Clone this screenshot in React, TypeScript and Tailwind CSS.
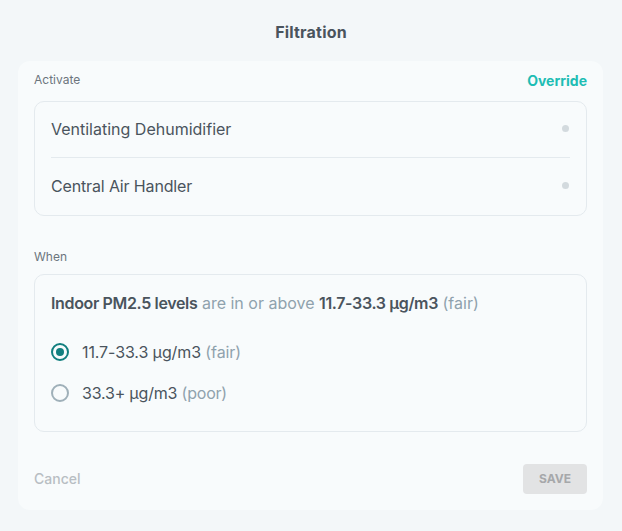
import React from "react";

export default function App() {
  return (
    <div className="w-[622px] h-[531px] bg-[#f3f7f9] flex flex-col items-center" style={{ fontFamily: "Inter, 'Liberation Sans', sans-serif" }}>
      <div className="h-[61px] flex items-center justify-center pt-[2px]">
        <h1 className="text-[16px] font-bold text-[#4a545d] tracking-[0.2px]">Filtration</h1>
      </div>
      <div className="w-[585px] h-[449px] bg-[#f8fbfc] rounded-[12px] px-[16px] pt-[11px] flex flex-col ml-[-1px]">
        <div className="flex items-center justify-between h-[16px]">
          <span className="text-[12px] text-[#6c757d]">Activate</span>
          <span className="text-[14px] font-bold text-[#1ebdb4]">Override</span>
        </div>
        <div className="mt-[13px] h-[115px] border border-[#e4eaee] rounded-[10px] px-[16px] flex flex-col">
          <div className="h-[56px] flex items-center justify-between border-b border-[#e4eaee] pb-[2px]">
            <span className="text-[16px] text-[#4a545d]">Ventilating Dehumidifier</span>
            <span className="w-[7px] h-[7px] rounded-full bg-[#d3dade] mr-[1px]"></span>
          </div>
          <div className="h-[57px] flex items-center justify-between pb-[2px]">
            <span className="text-[16px] text-[#4a545d] tracking-[-0.15px]">Central Air Handler</span>
            <span className="w-[7px] h-[7px] rounded-full bg-[#d3dade] mr-[1px]"></span>
          </div>
        </div>
        <div className="mt-[33px] h-[16px] flex items-center">
          <span className="text-[12px] text-[#6c757d]">When</span>
        </div>
        <div className="mt-[9px] h-[158px] border border-[#e4eaee] rounded-[10px] px-[16px] pt-[17px] flex flex-col">
          <p className="text-[16px] h-[22px] leading-[22px] text-[#8fa2ad]">
            <span className="font-semibold text-[#4a545d] tracking-[-0.35px]">Indoor PM2.5 levels</span> are in or above{" "}
            <span className="font-semibold text-[#4a545d] tracking-[-0.35px]">11.7-33.3 µg/m3</span> (fair)
          </p>
          <div className="mt-[27px] flex items-center h-[22px]">
            <span className="w-[18px] h-[18px] rounded-full border-2 border-[#127f7f] flex items-center justify-center">
              <span className="w-[8px] h-[8px] rounded-full bg-[#127f7f]"></span>
            </span>
            <span className="ml-[13px] text-[16px] text-[#4a545d] tracking-[-0.1px]">
              11.7-33.3 µg/m3 <span className="text-[#8fa2ad]">(fair)</span>
            </span>
          </div>
          <div className="mt-[19px] flex items-center h-[22px]">
            <span className="w-[18px] h-[18px] rounded-full border-2 border-[#9fb0b9]"></span>
            <span className="ml-[13px] text-[16px] text-[#4a545d] tracking-[-0.2px]">
              33.3+ µg/m3 <span className="text-[#8fa2ad]">(poor)</span>
            </span>
          </div>
        </div>
        <div className="mt-[32px] flex items-center justify-between">
          <span className="text-[14px] font-medium text-[#b8bec3] mt-[-2px]">Cancel</span>
          <button className="w-[64px] h-[30px] rounded-[4px] bg-[#e2e3e4] text-[12px] font-bold text-[#a6a8aa]">SAVE</button>
        </div>
      </div>
    </div>
  );
}
